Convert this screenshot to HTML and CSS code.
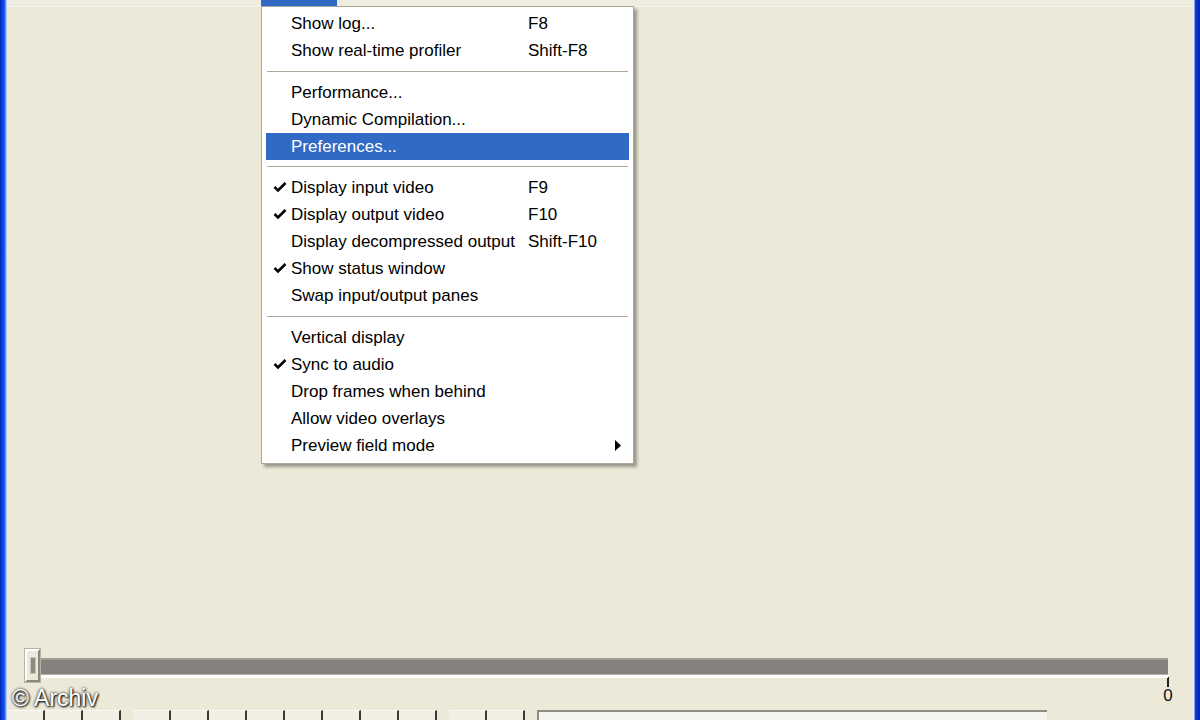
FILE: index.html
```html
<!DOCTYPE html>
<html lang="en">
<head>
    <meta charset="UTF-8">
    <title>VirtualDub - Options menu</title>
    <link rel="stylesheet" href="styles.css">
</head>
<body>
<div class="window">
    <div class="frame-left"></div>

    <div class="client">
        <div class="menubar">
            <span class="menubar-item" style="width: 254px"></span>
            <span class="menubar-item open"></span>
        </div>

        <div class="workspace"></div>

        <div class="slider-row">
            <div class="track">
                <div class="thumb"><div class="grip"></div></div>
            </div>
            <div class="tick-end">
                <div class="tick"></div>
                <span class="tick-label">0</span>
            </div>
        </div>

        <div class="toolbar">
            <div class="tool-group">
                <span class="tool"></span><span class="tool"></span><span class="tool"></span>
            </div>
            <div class="tool-group">
                <span class="tool"></span><span class="tool"></span><span class="tool"></span><span class="tool"></span>
                <span class="tool"></span><span class="tool"></span><span class="tool"></span><span class="tool"></span>
            </div>
            <div class="tool-group">
                <span class="tool"></span><span class="tool"></span>
            </div>
            <div class="position-field"></div>
        </div>
    </div>

    <div class="frame-right"></div>
</div>

<!-- dropdown menu lies over the workspace -->
<div class="menu">
    <div class="menu-item"><span class="check"></span><span class="label">Show log...</span><span class="key">F8</span><span class="sub"></span></div>
    <div class="menu-item"><span class="check"></span><span class="label">Show real-time profiler</span><span class="key">Shift-F8</span><span class="sub"></span></div>
    <div class="menu-sep"></div>
    <div class="menu-item"><span class="check"></span><span class="label">Performance...</span><span class="key"></span><span class="sub"></span></div>
    <div class="menu-item"><span class="check"></span><span class="label">Dynamic Compilation...</span><span class="key"></span><span class="sub"></span></div>
    <div class="menu-item selected"><span class="check"></span><span class="label">Preferences...</span><span class="key"></span><span class="sub"></span></div>
    <div class="menu-sep"></div>
    <div class="menu-item"><span class="check"><svg width="14" height="11" viewBox="0 0 14 11"><polyline points="1.5,5 5,8.5 12.5,1" fill="none" stroke="#000" stroke-width="2.6"/></svg></span><span class="label">Display input video</span><span class="key">F9</span><span class="sub"></span></div>
    <div class="menu-item"><span class="check"><svg width="14" height="11" viewBox="0 0 14 11"><polyline points="1.5,5 5,8.5 12.5,1" fill="none" stroke="#000" stroke-width="2.6"/></svg></span><span class="label">Display output video</span><span class="key">F10</span><span class="sub"></span></div>
    <div class="menu-item"><span class="check"></span><span class="label">Display decompressed output</span><span class="key">Shift-F10</span><span class="sub"></span></div>
    <div class="menu-item"><span class="check"><svg width="14" height="11" viewBox="0 0 14 11"><polyline points="1.5,5 5,8.5 12.5,1" fill="none" stroke="#000" stroke-width="2.6"/></svg></span><span class="label">Show status window</span><span class="key"></span><span class="sub"></span></div>
    <div class="menu-item"><span class="check"></span><span class="label">Swap input/output panes</span><span class="key"></span><span class="sub"></span></div>
    <div class="menu-sep"></div>
    <div class="menu-item"><span class="check"></span><span class="label">Vertical display</span><span class="key"></span><span class="sub"></span></div>
    <div class="menu-item"><span class="check"><svg width="14" height="11" viewBox="0 0 14 11"><polyline points="1.5,5 5,8.5 12.5,1" fill="none" stroke="#000" stroke-width="2.6"/></svg></span><span class="label">Sync to audio</span><span class="key"></span><span class="sub"></span></div>
    <div class="menu-item"><span class="check"></span><span class="label">Drop frames when behind</span><span class="key"></span><span class="sub"></span></div>
    <div class="menu-item"><span class="check"></span><span class="label">Allow video overlays</span><span class="key"></span><span class="sub"></span></div>
    <div class="menu-item"><span class="check"></span><span class="label">Preview field mode</span><span class="key"></span><span class="sub"><svg width="7" height="11" viewBox="0 0 7 11"><polygon points="0,0 6,5.5 0,11" fill="#000"/></svg></span></div>
</div>

<div class="watermark">&copy; Archiv</div>
</body>
</html>
```

FILE: styles.css
```css
html, body {
    height: 100%;
}

body {
    margin: 0;
    overflow: hidden;
    font-family: "Liberation Sans", Arial, sans-serif;
    background-color: #ECE9D8;
}

.window {
    display: flex;
    height: 720px;
}

.frame-left {
    width: 7px;
    background: linear-gradient(to right, #0022B8 0, #0A3BD6 30%, #1A5CEB 65%, #8FA8F0 85%, #DCE3F5 100%);
}

.frame-right {
    width: 8px;
    background: linear-gradient(to right, #E4EFF3 0, #E4EFF3 25%, #0B3ED9 40%, #0A2FC8 70%, #081FA8 100%);
}

.client {
    flex: 1;
    display: flex;
    flex-direction: column;
    background-color: #ECE9D8;
}

/* only the bottom of the menu bar is on screen */
.menubar {
    height: 6px;
    display: flex;
    background-color: #EFEDE0;
    border-bottom: 1px solid #F6F4EC;
}

.menubar-item {
    display: block;
    height: 6px;
}

.menubar-item.open {
    width: 76px;
    background-color: #316AC5;
}

.workspace {
    flex: 1;
}

.slider-row {
    display: flex;
    height: 62px;
    padding-left: 31px;
    padding-right: 24px;
}

.track {
    position: relative;
    flex: 1;
    height: 14px;
    margin-top: 10px;
    background-color: #85827D;
    border-top: 2px solid #A09D95;
    border-bottom: 1px solid #B4B1A8;
    box-shadow: 0 3px 0 #FFFFFF;
}

.thumb {
    position: absolute;
    left: -13px;
    top: -11px;
    width: 11px;
    height: 29px;
    background-color: #ECE9D8;
    border: 2px solid #FFFFFF;
    border-right-color: #8B887F;
    border-bottom-color: #8B887F;
    outline: 1px solid #B7B3A7;
}

.grip {
    width: 4px;
    height: 15px;
    margin: 6px 0 0 3px;
    background-color: #8E8B82;
    border: 1px solid #C7C3B6;
}

.tick-end {
    width: 0;
    display: flex;
    flex-direction: column;
    align-items: center;
    padding-top: 29px;
}

.tick {
    width: 2px;
    height: 10px;
    background-color: #222222;
}

.tick-label {
    font-family: "Liberation Sans", Arial, sans-serif;
    font-size: 17px;
    line-height: 18px;
    color: #111111;
}

.toolbar {
    display: flex;
    gap: 12px;
    height: 10px;
}

.tool-group {
    display: flex;
}

.tool {
    display: block;
    width: 38px;
    height: 10px;
    border-top: 1px solid #F9F8F3;
    border-right: 2px solid #3A3A36;
    box-sizing: border-box;
    background-color: #F1EFE4;
}

.position-field {
    width: 508px;
    border-top: 2px solid #8F8C83;
    border-left: 2px solid #8F8C83;
    background-color: #F5F4EE;
}

/* popup menu */
.menu {
    position: absolute;
    left: 261px;
    top: 6px;
    width: 363px;
    padding: 3px 4px 4px 4px;
    background-color: #FFFFFF;
    border: 1px solid #ACA899;
    box-shadow: 3px 3px 3px rgba(0, 0, 0, 0.35);
    font-family: "Liberation Sans", Tahoma, sans-serif;
    font-size: 17px;
    color: #000000;
}

.menu-item {
    display: grid;
    grid-template-columns: 25px 237px 1fr 14px;
    align-items: center;
    height: 27px;
    line-height: 27px;
    white-space: nowrap;
}

.menu-item.selected {
    background-color: #316AC5;
    color: #FFFFFF;
}

.check {
    display: flex;
    align-items: center;
    justify-content: center;
    padding-left: 3px;
}

.sub {
    display: flex;
    align-items: center;
}

.menu-sep {
    height: 1px;
    margin: 6.5px 1px 7px 1px;
    background-color: #ACA899;
}

.watermark {
    position: absolute;
    left: 12px;
    top: 685px;
    font-family: "Liberation Sans", Arial, sans-serif;
    font-size: 23px;
    color: #FFFFFF;
    text-shadow: 0 0 3px #000000, 1px 1px 2px #000000;
}
```
